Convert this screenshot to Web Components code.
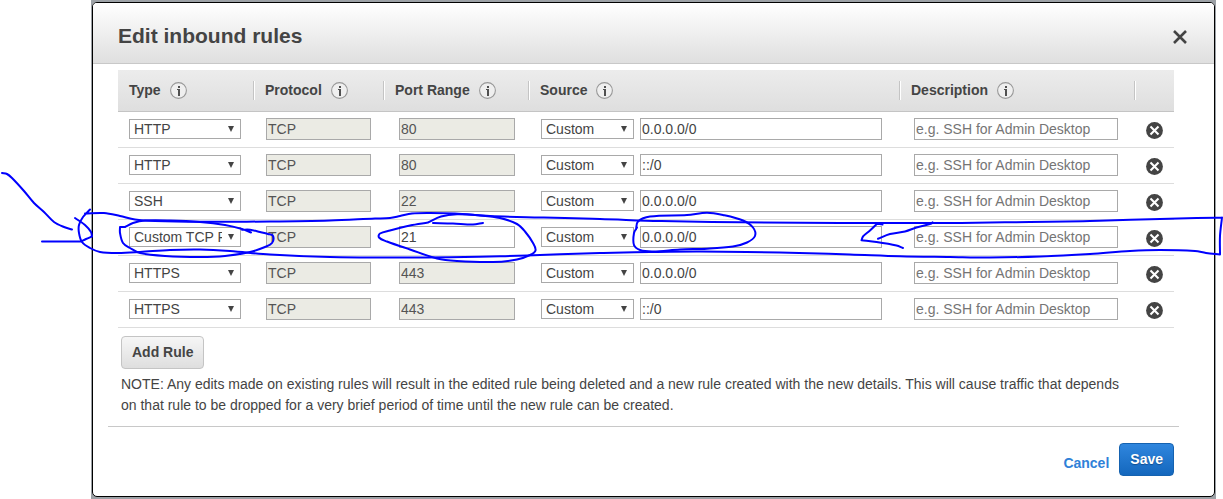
<!DOCTYPE html>
<html lang="en">
<head>
<meta charset="utf-8">
<title>Edit inbound rules</title>
<style>
  body { margin: 0; background: #fff; color: #444; font: 14px/21px "Liberation Sans", Arial, sans-serif; }
  main { position: relative; padding: 0 7px 0 91px; }
  pen-marks { position: absolute; left: 0; top: 0; width: 100%; }
</style>
</head>
<body>
<main>
  <modal-dialog>
    <span slot="title">Edit inbound rules</span>
    <rules-table></rules-table>
    <push-button id="add">Add Rule</push-button>
    <span slot="note">NOTE: Any edits made on existing rules will result in the edited rule being deleted and a new rule created with the new details. This will cause traffic that depends on that rule to be dropped for a very brief period of time until the new rule can be created.</span>
    <text-link slot="actions">Cancel</text-link>
    <push-button slot="actions" primary>Save</push-button>
  </modal-dialog>
  <pen-marks></pen-marks>
</main>

<script>
const define = (name, html, setup) => customElements.define(name, class extends HTMLElement {
  constructor() {
    super();
    const root = this.attachShadow({ mode: 'open' });
    const template = document.createElement('template');
    template.innerHTML = html;
    root.append(template.content.cloneNode(true));
    if (setup) setup(root, this);
  }
});

define('info-icon', `
  <style>
    :host { display: block; width: 17px; height: 17px; }
    svg { display: block; }
  </style>
  <svg width="17" height="17" viewBox="0 0 17 17" aria-hidden="true">
    <circle cx="8.5" cy="8.5" r="7.9" fill="#efefef" stroke="#999" stroke-width="1.1"/>
    <path d="M8 4h2v2H8zM7 7h3v7H8V8H7z" fill="#505050"/>
  </svg>`);

define('remove-button', `
  <style>
    :host { display: block; width: 17px; height: 17px; }
    button { display: block; width: 17px; height: 17px; padding: 0; border: 0; background: none; }
    svg { display: block; }
  </style>
  <button type="button" aria-label="Delete rule">
    <svg width="17" height="17" viewBox="0 0 17 17">
      <circle cx="8.5" cy="8.5" r="8.4" fill="#444"/>
      <path d="M4.5 4.5l8 8M12.5 4.5l-8 8" stroke="#fff" stroke-width="2.1"/>
    </svg>
  </button>`);

define('push-button', `
  <style>
    :host { display: inline-block; }
    button { display: block; height: 33px; padding: 0 10px; border: 1px solid #c4c4c4; border-radius: 4px;
      background: linear-gradient(#f6f6f6, #dedede); color: #444; font: bold 14px/31px "Liberation Sans", Arial, sans-serif; }
    :host([primary]) button { border-color: #1562b0; color: #fff;
      background: linear-gradient(#2f86de, #1467bd); text-shadow: 0 1px 1px #0f4d91; }
  </style>
  <button type="button"><slot></slot></button>`);

define('text-link', `
  <style>
    :host { display: inline-block; }
    a { color: #2f81d8; font-weight: bold; text-decoration: none; }
  </style>
  <a href="#"><slot></slot></a>`);

define('modal-dialog', `
  <style>
    :host { display: block; padding: 2px 1px; background: #9ca1a6; }
    section { border: 1px solid #000; border-radius: 5px; background: #fff; overflow: hidden; }
    header { display: flex; align-items: center; justify-content: space-between; height: 60px; padding: 0 27px 0 25px;
      border-bottom: 1px solid #c8c8c8; background: linear-gradient(#fff, #dfdfdf); }
    h1 { margin: 0; padding-top: 6px; font-size: 21px; line-height: 28px; font-weight: bold; }
    .close { padding: 8px 0 0; border: 0; background: none; }
    svg { display: block; }
    .body { padding: 6px 40px 0 25px; }
    ::slotted(#add) { margin: 8px 0 5px 3px; }
    p { margin: 0 48px 10px 3px; }
    footer { display: flex; justify-content: flex-end; align-items: center; gap: 10px; margin: 0 35px 0 15px;
      padding: 16px 5px 20px 0; border-top: 1px solid #c8c8c8; }
    ::slotted(text-link) { padding-top: 8px; }
    ::slotted(push-button) { vertical-align: top; }
  </style>
  <section role="dialog" aria-labelledby="title">
    <header>
      <h1 id="title"><slot name="title"></slot></h1>
      <button class="close" type="button" aria-label="Close">
        <svg width="14" height="14" viewBox="0 0 14 14"><path d="M1 1l12 12M13 1L1 13" stroke="#444" stroke-width="2.6"/></svg>
      </button>
    </header>
    <div class="body"><slot></slot><p><slot name="note"></slot></p></div>
    <footer><slot name="actions"></slot></footer>
  </section>`);

const rules = [
  ['HTTP', '80', '0.0.0.0/0'],
  ['HTTP', '80', '::/0'],
  ['SSH', '22', '0.0.0.0/0'],
  ['Custom TCP Rule', '21', '0.0.0.0/0'],
  ['HTTPS', '443', '0.0.0.0/0'],
  ['HTTPS', '443', '::/0']
];
const picker = (label, value) => `
  <span class="picker"><select aria-label="${label}"><option>${value}</option></select>
  <svg width="6" height="6" viewBox="0 0 6 6" aria-hidden="true"><path d="M0 0h6L3 6z" fill="#444"/></svg></span>`;
const heading = text => `<th scope="col"><div class="head">${text}<info-icon></info-icon></div></th>`;

define('rules-table', `
  <style>
    :host { display: block; }
    table { width: 100%; table-layout: fixed; border-collapse: separate; border-spacing: 0; }
    .type { width: 135px; } .protocol { width: 130px; } .port { width: 145px; } .description { width: 235px; } .remove { width: 40px; }
    thead tr { background: linear-gradient(#ececec, #dedede); }
    th { height: 41px; padding: 0; border-bottom: 1px solid #c4c4c4; text-align: left; }
    .head { display: flex; align-items: center; gap: 9px; height: 19px; padding-left: 11px; }
    th + th .head { border-left: 1px solid #c4c4c4; box-shadow: inset 1px 0 #fff; }
    td { padding: 6px 0 7px 11px; border-bottom: 1px solid #ddd; vertical-align: top; }
    td:nth-child(2) { padding-left: 13px; }
    td:nth-child(3) { padding-left: 16px; }
    td:nth-child(4) { padding-left: 13px; }
    td:nth-child(5) { padding-left: 15px; }
    td:nth-child(6) { padding: 10px 0 0 12px; }
    input, select { display: block; box-sizing: border-box; width: 100%; margin: 0; border: 1px solid #a9a9a9; border-radius: 0;
      background: #fff; color: #444; font: 14px/18px "Liberation Sans", Arial, sans-serif; }
    input { height: 22px; padding: 0 1px; }
    input:disabled { background: #ebebe4; color: #545454; }
    input::placeholder { color: #757575; }
    select { height: 20px; padding: 0 18px 0 4px; appearance: none; }
    .picker { display: grid; flex: none; align-items: center; padding: 1px 0; }
    .picker > * { grid-area: 1 / 1; }
    .picker svg { justify-self: end; margin-right: 7px; pointer-events: none; }
    .type-cell { width: 112px; } .protocol-cell { width: 105px; } .port-cell { width: 116px; } .description-cell { width: 204px; }
    .source-cell { display: flex; gap: 6px; margin-right: 17px; }
    .source-cell .picker { width: 93px; }
  </style>
  <table>
    <colgroup><col class="type"><col class="protocol"><col class="port"><col><col class="description"><col class="remove"></colgroup>
    <thead><tr>${['Type', 'Protocol', 'Port Range', 'Source', 'Description'].map(heading).join('')}<th><div class="head"></div></th></tr></thead>
    <tbody>${rules.map(([type, port, source]) => `<tr>
      <td><div class="type-cell">${picker('Type', type)}</div></td>
      <td><div class="protocol-cell"><input aria-label="Protocol" value="TCP" disabled></div></td>
      <td><div class="port-cell"><input aria-label="Port Range" value="${port}"${port === '21' ? '' : ' disabled'}></div></td>
      <td><div class="source-cell">${picker('Source type', 'Custom')}<input aria-label="Source" value="${source}"></div></td>
      <td><div class="description-cell"><input aria-label="Description" placeholder="e.g. SSH for Admin Desktop"></div></td>
      <td><remove-button></remove-button></td></tr>`).join('')}</tbody>
  </table>`);

// Freehand strokes, each a list of x,y points joined by a smooth curve; a bar marks a sharp corner.
const strokes = [
  '2,173 7,174 12,178 24,191 34,203 44,212 54,222 64,227 72,229.5',
  '42,241.5 60,241.5 81,241.5 | 81,241.5 86,239 92,236.5 | 92,236.5 91,232 85,225 75,218',
  '85,213.5 104,213 120,216 135,219.5 155,221 200,221.8 270,221.5 330,220.5 375,218.5 390,218 400,216 412,213.5 430,213 455,213.5 490,216 540,217.5 600,219 660,221 740,222.3 840,223 950,223 1030,222 1090,221 1160,219 1222,217.5 | 1222,217.5 1220,236 1220,254.5 | 1220,254.5 1206,253 1195,251 1160,250 1130,251 1090,254 1040,256.5 990,257.5 950,257 900,256.3 850,254.5 780,252.5 700,251.5 650,252 600,253 540,255 500,256.3 450,257.2 390,257.5 330,257 270,254.5 230,251 200,249.5 170,250 140,252 118,253 100,252 90,248 82,242 79,233 79,225 83,217 90,209.5',
  '251,232.5 242,229 225,225 200,222 170,220.5 145,220.5 133,223 125,227 | 125,227 120,227 | 120,227 120,233 123,243 130,248 140,253 165,256 200,257 225,256 250,252 265,247 272,243 273,236 268,234 260,232 250,229.7 242,229.7',
  '483,223 473,224.5 453,223.5 433,223 | 428,222.5 410,225.5 390,230.5 380,233.5 379,237.5 387,241.5 410,249.5 437,258.5 457,261 493,262 517,259.5 530,255 535.5,250.5 533,243 525,231.5 517,224 500,218 480,215.5 457,214.3 441,216.5 428,222.5',
  '636,229.5 638,221.5 650,216.5 687,215 707,212.7 723,215 743,220.5 753,227.5 755,236 747,242.5 733,246.5 707,248.7 680,249.5 653,251.5 640,250 634,245 634,233 637,227.5',
  '882.5,224.5 877,223.7 | 877,223.7 870,230.5 863,236.5 861.5,240.3 | 861.5,240.3 876.5,242 896.5,245.5 903,248',
  '878,238.8 890,234 905,231.5 916.5,227.5 931.5,223.5 932.5,222.3'
];
const smooth = text => {
  const p = text.split(' ').map(pair => pair.split(',').map(Number));
  let d = 'M' + p[0];
  for (let i = 0; i < p.length - 1; i++) {
    const a = p[i - 1] || p[i], b = p[i], c = p[i + 1], e = p[i + 2] || c;
    // Tangents are capped by the segment length so uneven spacing does not overshoot.
    const len = Math.hypot(c[0] - b[0], c[1] - b[1]) / 3;
    const ctl = (from, to, origin, sign) => {
      const dx = to[0] - from[0], dy = to[1] - from[1], n = Math.hypot(dx, dy) || 1;
      return [origin[0] + sign * dx / n * len, origin[1] + sign * dy / n * len];
    };
    d += 'C' + ctl(a, c, b, 1) + ' ' + ctl(b, e, c, -1) + ' ' + c;
  }
  return d;
};
define('pen-marks', `
  <style>
    :host { display: block; pointer-events: none; }
    svg { display: block; width: 100%; height: auto; }
  </style>
  <svg viewBox="0 0 1223 499" fill="none" stroke="#0000fe" stroke-width="2" stroke-linecap="round" stroke-linejoin="round" aria-hidden="true">
    ${strokes.map(s => `<path d="${s.split(' | ').map(smooth).join('')}"/>`).join('')}
  </svg>`);
</script>
</body>
</html>
